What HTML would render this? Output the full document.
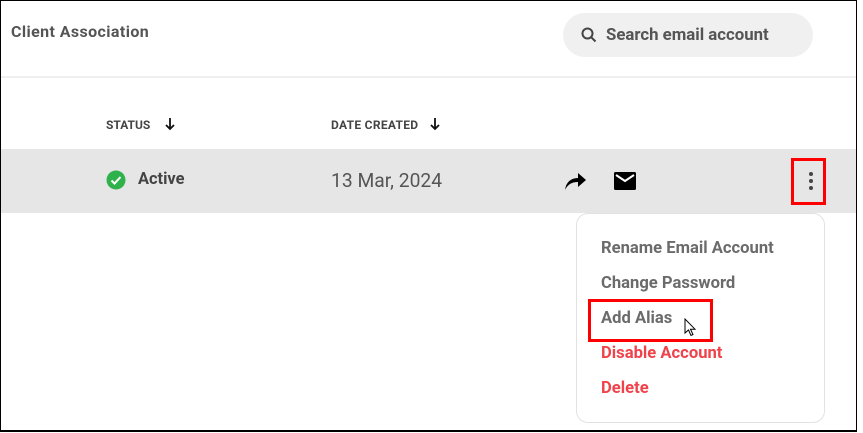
<!DOCTYPE html>
<html><head><style>
*{margin:0;padding:0;box-sizing:border-box}
body{width:863px;height:433px;background:#fff;position:relative;overflow:hidden;font-family:"Roboto","Liberation Sans",sans-serif}
.abs{position:absolute}
.frame{left:0;top:0;width:857px;height:432px;border:1px solid #000;border-bottom-width:2px}
.title{left:11px;top:22px;font-size:16px;font-weight:bold;color:#555;letter-spacing:0.4px}
.search{left:563px;top:13px;width:250px;height:44px;border-radius:22px;background:#f0f0f0}
.search span{position:absolute;left:43px;top:12px;font-size:16.8px;font-weight:bold;color:#555}
.hr{left:1px;top:76px;width:855px;height:2px;background:#efefef}
.th{top:118px;font-size:12px;font-weight:bold;color:#444}
.row{left:1px;top:149px;width:855px;height:64px;background:#e6e6e6}
.menu{left:576px;top:213px;width:249px;height:210px;border:1px solid #e2e2e2;border-radius:12px;background:#fff}
.mi{left:601px;font-size:16.6px;font-weight:bold;color:#6b6b6b}
.red{color:#f0424b}
.box{border:3px solid #f00}
</style></head><body>
<div class="abs frame"></div>
<div class="abs title">Client Association</div>
<div class="abs search">
<svg class="abs" style="left:18px;top:14px" width="16" height="16" viewBox="0 0 16 16"><circle cx="6.5" cy="6.5" r="5" fill="none" stroke="#444" stroke-width="2"/><path d="M10.2 10.2L14.5 14.5" stroke="#444" stroke-width="2"/></svg>
<span>Search email account</span></div>
<div class="abs hr"></div>
<div class="abs th" style="left:106px">STATUS</div>
<svg class="abs" style="left:164px;top:117px" width="12" height="14" viewBox="0 0 12 14"><path d="M6 1v11M2 8l4 4 4-4" fill="none" stroke="#111" stroke-width="1.8"/></svg>
<div class="abs th" style="left:331px;letter-spacing:0.3px">DATE CREATED</div>
<svg class="abs" style="left:429px;top:117px" width="12" height="14" viewBox="0 0 12 14"><path d="M6 1v11M2 8l4 4 4-4" fill="none" stroke="#111" stroke-width="1.8"/></svg>
<div class="abs row"></div>
<svg class="abs" style="left:106px;top:170px" width="20" height="20" viewBox="0 0 20 20"><circle cx="10" cy="10" r="9.5" fill="#2fb24c"/><path d="M5.5 10.5l3 3 6-6.5" fill="none" stroke="#fff" stroke-width="2"/></svg>
<div class="abs" style="left:138px;top:170px;font-size:16.4px;font-weight:bold;color:#444">Active</div>
<div class="abs" style="left:331px;top:169px;font-size:19.3px;color:#555">13 Mar, 2024</div>
<svg class="abs" style="left:563px;top:171px" width="24" height="20" viewBox="0 0 24 20"><path d="M2 19C3 11 8 7 15 7V2l8 7-8 7v-5C9 11 5 13 2 19z" fill="#000"/></svg>
<svg class="abs" style="left:614px;top:172px" width="22" height="18" viewBox="0 0 22 18"><rect x="0" y="0" width="22" height="18" rx="1.5" fill="#000"/><path d="M2 3l9 6 9-6" fill="none" stroke="#fff" stroke-width="2"/></svg>
<div class="abs box" style="left:791px;top:158px;width:35px;height:47px"></div>
<svg class="abs" style="left:808px;top:171px" width="6" height="20" viewBox="0 0 6 20"><circle cx="3" cy="3" r="2" fill="#444"/><circle cx="3" cy="10" r="2" fill="#444"/><circle cx="3" cy="17" r="2" fill="#444"/></svg>
<div class="abs menu"></div>
<div class="abs mi" style="top:239px">Rename Email Account</div>
<div class="abs mi" style="top:274px">Change Password</div>
<div class="abs mi" style="top:309px">Add Alias</div>
<div class="abs mi red" style="top:344px">Disable Account</div>
<div class="abs mi red" style="top:379px">Delete</div>
<div class="abs box" style="left:588px;top:299px;width:125px;height:43px"></div>
<svg class="abs" style="left:684px;top:318px" width="13" height="19" viewBox="0 0 13 19"><path d="M1 1v14l3.5-3 2.5 5.5 2-1-2.5-5.3H11z" fill="#fff" stroke="#000" stroke-width="1"/></svg>
</body></html>
